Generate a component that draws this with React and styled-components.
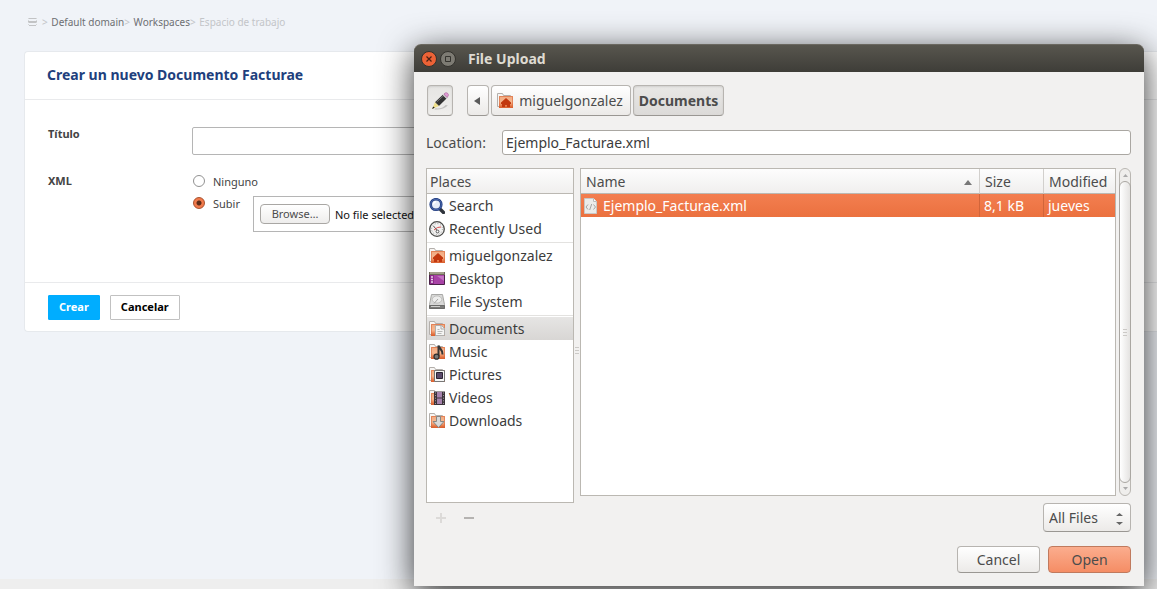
import React, { useId } from 'react';
import styled, { createGlobalStyle, css } from 'styled-components';

const GlobalStyle = createGlobalStyle`
  *, *::before, *::after { box-sizing: border-box; }
  body {
    margin: 0;
    background: #f0f3f8;
    font-family: "Noto Sans", "Open Sans", sans-serif;
    font-size: 11px;
    color: #444;
  }
  button, input, select { font: inherit; color: inherit; margin: 0; }
`;

const Page = styled.div`
  position: relative;
  display: flex;
  flex-direction: column;
  min-height: 100vh;
  overflow: hidden;
`;

const Breadcrumb = styled.nav`
  display: flex;
  align-items: center;
  height: 51px;
  padding: 0 28px 8px;
  font-size: 10px;
  color: #c3c5c8;
  gap: 5px;
`;

const Crumb = styled.a`
  margin-left: 1px;
  color: #6d6f73;
  text-decoration: none;
`;

const CurrentCrumb = styled.span`
  margin-left: 1px;
`;

const CrumbGroup = styled.span`
  white-space: nowrap;
`;

const Card = styled.main`
  margin-left: 24px;
  background: #fff;
  border: 1px solid #e6e9ed;
  border-right: 0;
  border-radius: 4px 0 0 4px;
`;

const CardHeader = styled.header`
  height: 48px;
  padding: 0 22px;
  border-bottom: 1px solid #e9eaec;
`;

const Title = styled.h1`
  margin: 0;
  font-size: 14px;
  line-height: 46px;
  font-weight: 700;
  color: #213f7d;
`;

const Form = styled.form`
  display: block;
`;

const Fields = styled.div`
  display: grid;
  grid-template-columns: 144px 1fr;
  row-gap: 18px;
  padding: 27px 23px 48px;
`;

const FieldLabel = styled.label`
  font-weight: 700;
  line-height: 14px;
`;

const FieldName = styled.div`
  font-weight: 700;
  line-height: 16px;
`;

const TextInput = styled.input`
  width: 100%;
  height: 28px;
  border: 1px solid #b5b5b5;
  border-radius: 2px;
  background: #fff;
  outline: 0;
`;

const Options = styled.div`
  display: flex;
  flex-direction: column;
`;

const OptionRow = styled.div`
  display: flex;
  align-items: flex-start;
  height: ${(p) => (p.$tall ? '39px' : '22px')};
`;

const OptionLabel = styled.label`
  display: flex;
  align-items: flex-start;
  gap: 8px;
  width: 61px;
  line-height: 18px;
`;

const Radio = styled.input`
  appearance: none;
  flex: none;
  width: 12px;
  height: 12px;
  margin: 2px 0 0 1px;
  border: 1px solid #929292;
  border-radius: 50%;
  background: #fff;
  &:checked {
    border-color: #a8502c;
    background: radial-gradient(circle, #5d2c18 0 1px, #5d2c18 2px, #f27b4c 3px, #ee7546 100%);
  }
`;

const FileField = styled.div`
  display: flex;
  align-items: center;
  flex: 1;
  gap: 5px;
  height: 36px;
  margin-top: 1px;
  padding: 0 6px;
  border: 1px solid #b5b5b5;
  color: #111;
  white-space: nowrap;
`;

const BrowseButton = styled.button`
  width: 70px;
  height: 20px;
  padding: 0;
  border: 1px solid #a9a7a4;
  border-radius: 4px;
  background: linear-gradient(#fff, #eeedec);
  color: #4c4c4c;
  line-height: 16px;
`;

const CardFooter = styled.footer`
  display: flex;
  gap: 10px;
  height: 49px;
  padding: 12px 23px;
  border-top: 1px solid #e9eaec;
`;

const ActionButton = styled.button`
  height: 25px;
  padding: 0 10px 2px;
  border: 1px solid ${(p) => (p.$primary ? '#00adff' : '#c1c1c1')};
  border-radius: 1px;
  background: ${(p) => (p.$primary ? '#00adff' : '#fff')};
  color: ${(p) => (p.$primary ? '#fff' : '#000')};
  font-weight: 700;
  line-height: 16px;
`;

const PageFoot = styled.div`
  height: 10px;
  margin-top: auto;
  background: #eeeeee;
`;

const Dialog = styled.section`
  position: absolute;
  top: 44px;
  left: 414px;
  right: 13px;
  border-radius: 7px 7px 0 0;
  background: #f2f1f0;
  box-shadow: 0 8px 34px rgba(0, 0, 0, 0.8);
  font-size: 14px;
  color: #3c3c3c;
`;

const TitleBar = styled.header`
  display: flex;
  align-items: center;
  height: 28px;
  padding: 0 7px;
  gap: 3px;
  border-radius: 7px 7px 0 0;
  border-top: 1px solid #6b6860;
  background: linear-gradient(#58564e, #3e3d38);
`;

const WindowButton = styled.button`
  display: flex;
  width: 16px;
  height: 16px;
  padding: 0;
  border: 0;
  border-radius: 50%;
  background: none;
`;

const DialogTitle = styled.h2`
  margin: 0 0 0 9px;
  font-size: 14px;
  line-height: 20px;
  font-weight: 700;
  color: #dfdbd2;
`;

const DialogBody = styled.div`
  display: flex;
  flex-direction: column;
  padding: 13px 13px 13px 12px;
`;

const raised = css`
  border: 1px solid #b7b4b0;
  border-bottom-color: #9a9793;
  border-radius: 4px;
  background: linear-gradient(#ffffff, #eceae8);
  color: #4c4c4c;
`;

const PathBar = styled.div`
  display: flex;
  gap: 2px;
  height: 31px;
  padding-left: 1px;
`;

const PathButton = styled.button`
  ${raised}
  display: flex;
  align-items: center;
  justify-content: center;
  gap: 6px;
  width: ${(p) => p.$width};
  padding: 0 2px 0 0;
  line-height: 20px;
  white-space: nowrap;
  ${(p) => p.$pressed && css`
    padding: 0;
    background: linear-gradient(#e9e8e6, #dcdad8);
    box-shadow: inset 0 1px 2px rgba(0, 0, 0, 0.1);
    font-weight: 700;
  `}
`;

const EditButton = styled(PathButton)`
  margin-right: 12px;
  background: linear-gradient(#e6e5e3, #efeeec);
`;

const LocationRow = styled.div`
  display: flex;
  align-items: center;
  margin: 14px 0 13px;
  height: 25px;
`;

const LocationLabel = styled.label`
  width: 76px;
  color: #4c4c4c;
`;

const LocationInput = styled.input`
  flex: 1;
  height: 25px;
  padding: 0 3px;
  border: 1px solid #aaa7a2;
  border-radius: 3px;
  background: #fff;
  outline: 0;
`;

const Panes = styled.div`
  display: flex;
`;

const PlacesColumn = styled.div`
  width: 148px;
`;

const PlacesBox = styled.nav`
  min-height: 335px;
  border: 1px solid #bbb8b2;
  background: #fff;
`;

const PlacesHeader = styled.div`
  height: 25px;
  padding: 0 3px;
  border-bottom: 1px solid #bbb8b2;
  background: linear-gradient(#fdfdfd, #f0efee);
  line-height: 26px;
  color: #4c4c4c;
`;

const PlaceGroup = styled.ul`
  margin: 0;
  padding: 0;
  list-style: none;
  & + & {
    margin-top: 2px;
    padding-top: 1px;
    border-top: 1px solid #e3e2e0;
  }
`;

const PlaceButton = styled.button`
  display: flex;
  align-items: center;
  gap: 4px;
  width: 100%;
  height: 23px;
  padding: 0 2px;
  border: 0;
  background: ${(p) => (p.$active ? 'linear-gradient(#e6e5e4, #d8d6d4)' : 'none')};
  line-height: 20px;
  text-align: left;
  white-space: nowrap;
`;

const PlaceTools = styled.div`
  display: flex;
  gap: 12px;
  padding: 7px 7px 0;
`;

const ToolButton = styled.button`
  display: flex;
  width: 16px;
  height: 16px;
  padding: 0;
  border: 0;
  background: none;
`;

const Splitter = styled.div`
  display: flex;
  flex-direction: column;
  gap: 2px;
  width: 6px;
  padding: 179px 1px 0;
`;

const SplitterMark = styled.span`
  height: 1px;
  background: #cbc9c6;
`;

const FilesColumn = styled.div`
  display: flex;
  flex-direction: column;
  align-items: stretch;
  flex: 1;
  gap: 7px;
`;

const FilesArea = styled.div`
  display: flex;
  gap: 3px;
  min-height: 328px;
`;

const FilesBox = styled.div`
  flex: 1;
  border: 1px solid #bbb8b2;
  background: #fff;
`;

const FileTable = styled.table`
  width: 100%;
  border-collapse: separate;
  border-spacing: 0;
  table-layout: fixed;
`;

const HeadCell = styled.th`
  width: ${(p) => p.$width};
  height: 25px;
  padding: 2px 5px 0;
  border-bottom: 1px solid #bbb8b2;
  border-left: ${(p) => (p.$first ? '0' : '1px solid #d2d0cd')};
  background: linear-gradient(#fdfdfd, #f0efee);
  font-weight: 400;
  line-height: 20px;
  text-align: left;
  white-space: nowrap;
  color: #4c4c4c;
`;

const HeadContent = styled.span`
  display: flex;
  align-items: center;
  justify-content: space-between;
  padding-right: 2px;
`;

const Cell = styled.td`
  height: 23px;
  padding: 0 ${(p) => (p.$first ? '2px' : '4px')};
  border-left: ${(p) => (p.$first ? '0' : '1px solid #d1653a')};
  background: linear-gradient(#f37e50, #eb713f);
  line-height: 20px;
  white-space: nowrap;
  color: #fff;
`;

const FileName = styled.span`
  display: flex;
  align-items: center;
  gap: 4px;
`;

const Scrollbar = styled.div`
  display: flex;
  flex-direction: column;
  align-items: center;
  width: 12px;
  border: 1px solid #bab7b2;
  border-radius: 6px;
  background: #efeeec;
`;

const ScrollArrow = styled.svg`
  flex: none;
  width: 11px;
  height: 12px;
`;

const ScrollThumb = styled.div`
  display: flex;
  flex-direction: column;
  justify-content: center;
  gap: 2px;
  flex: 1;
  width: 12px;
  padding: 0 3px;
  border: 1px solid #aaa7a2;
  border-radius: 6px;
  background: linear-gradient(90deg, #fff, #e4e3e1);
`;

const FilterWrap = styled.div`
  position: relative;
  align-self: flex-end;
  width: 88px;
  height: 29px;
`;

const FilterSelect = styled.select`
  ${raised}
  appearance: none;
  width: 100%;
  height: 100%;
  padding: 0 5px;
`;

const FilterArrows = styled.svg`
  position: absolute;
  top: 10px;
  right: 8px;
  pointer-events: none;
`;

const DialogActions = styled.div`
  display: flex;
  justify-content: flex-end;
  gap: 8px;
  margin-top: 14px;
`;

const DialogButton = styled.button`
  ${raised}
  width: 83px;
  height: 27px;
  padding: 0;
  line-height: 20px;
  ${(p) => p.$primary && css`
    border-color: #c07a5e;
    background: linear-gradient(#fbad8e, #f58d65);
  `}
`;

const Icon = ({ children, size = 16 }) => (
  <svg width={size} height={size} viewBox="0 0 16 16" fill="none" aria-hidden="true">{children}</svg>
);

const FolderBase = () => {
  const id = useId();
  return (
    <>
      <defs>
        <linearGradient id={id} x1="0" y1="0" x2="0" y2="1">
          <stop offset="0" stopColor="#f0a980" />
          <stop offset=".5" stopColor="#f7b890" />
          <stop offset="1" stopColor="#d9541f" />
        </linearGradient>
      </defs>
      <path d="M.5 13.5V.5h5l1 2h7v11z" fill="#f7f5f3" stroke="#b3afab" />
      <path d="M2 3h14v12H2z" fill={`url(#${id})`} />
      <path d="M2.5 14.5v-11h13v11z" stroke="#d9683a" strokeOpacity=".6" />
    </>
  );
};

const HomeIcon = () => (
  <Icon>
    <FolderBase />
    <path d="M9 5 4 9.500V11h1v3h3v-2h2v2h3v-3h1V9.500z" fill="#c2380f" />
  </Icon>
);

const SearchIcon = () => (
  <Icon>
    <path d="m11.500 11.500 3 3" stroke="#30343c" strokeWidth="3.400" strokeLinecap="round" />
    <circle cx="7" cy="6.500" r="5.300" fill="#e6edf8" stroke="#233f82" strokeWidth="2.600" />
    <circle cx="7" cy="6.500" r="5.300" stroke="#5875b8" strokeWidth=".8" />
    <path d="M4.500 6.500c0-1.600 1-2.600 2.500-2.700" stroke="#fff" strokeWidth="1.400" />
  </Icon>
);

const ClockIcon = () => (
  <Icon>
    <circle cx="8" cy="8" r="7.300" fill="#f2f2f1" stroke="#4b4b49" strokeWidth="1.300" />
    <circle cx="8" cy="8" r="5.400" stroke="#999" strokeDasharray="1 1.800" />
    <path d="m8.500 10-4-5" stroke="#555" />
    <path d="m5 9 3.500-2.500L12 6" stroke="#dc5050" />
    <circle cx="8.500" cy="10.500" r="1.400" fill="#fff" stroke="#555" />
  </Icon>
);

const DesktopIcon = () => (
  <Icon>
    <path d="M.5 1.500h15v12H.5z" fill="#8e2a8c" stroke="#4b2148" />
    <path d="M5 4h10v9H5z" fill="#a843a6" />
    <path d="M8 5h7v5z" fill="#c473c1" />
    <path d="M0 1h16v3H0z" fill="#6e6a58" />
    <path d="M1 2h14" stroke="#d9d6bf" />
    <path d="M2 6h2M2 8.500h2M2 11h2" stroke="#ecd3eb" strokeWidth="1.400" />
  </Icon>
);

const DiskIcon = () => (
  <Icon>
    <path d="M2.500.5h11l2 10v4H.5v-4z" fill="#d8d8d7" stroke="#a8a8a6" />
    <ellipse cx="8" cy="5.500" rx="4.800" ry="3.600" fill="#ededec" stroke="#c0c0be" />
    <path d="m9 5-4 4.500" stroke="#a5a5a3" />
    <path d="M.5 11.500h15v3H.5z" fill="#7b7b79" stroke="#6b6b69" />
    <path d="M2 12.500h9" stroke="#cfcfcd" />
  </Icon>
);

const DocumentsIcon = () => (
  <Icon>
    <FolderBase />
    <path d="M6.500 4.500h6l3 3v7h-9z" fill="#f4f4f3" stroke="#b0afad" />
    <path d="M12 4.500V8h3.500" stroke="#aaa" />
    <path d="M8.500 8.500h2M8.500 10.500h5M8.500 12.500h4" stroke="#b8b8b6" />
  </Icon>
);

const MusicIcon = () => (
  <Icon>
    <FolderBase />
    <path d="M9.500 12.500v-11c.5 3 4.500 4 4 9" stroke="#353535" strokeWidth="2" />
    <circle cx="7.500" cy="12.700" r="2.500" fill="#777" stroke="#2e2e2e" strokeWidth="1.200" />
  </Icon>
);

const PicturesIcon = () => (
  <Icon>
    <FolderBase />
    <path d="M5.500 3.500h10v11h-10z" fill="#f6f6f5" stroke="#777" />
    <path d="M7.500 5.500h6v6h-6z" fill="#5a4a6a" stroke="#2b2433" />
  </Icon>
);

const VideosIcon = () => (
  <Icon>
    <FolderBase />
    <path d="M5 1.500h11V15H5z" fill="#3a3339" />
    <path d="M8 2h5v5.500H8zM8 8.500h5V14H8z" fill="#a582ad" />
    <path d="M6.500 2.500v12M14.500 2.500v12" stroke="#a9a3a8" strokeDasharray="1 1.600" />
  </Icon>
);

const DownloadsIcon = () => (
  <Icon>
    <FolderBase />
    <path d="M7.500 3.500h4v5H15l-5.500 6-5.500-6h3.500z" fill="#d8d8d7" stroke="#868684" />
  </Icon>
);

const XmlFileIcon = () => (
  <Icon>
    <path d="M1.500.5h9l3 3v12h-12z" fill="#ececea" stroke="#c9c8c6" />
    <path d="M10.500.5v3h3" stroke="#bbb" fill="#fff" />
    <path d="M5 6.500 3 9l2 2.500M10.500 6.500l2 2.500-2 2.500M8.700 6l-2 6" stroke="#a4a4a2" />
  </Icon>
);

const PencilIcon = () => (
  <Icon size={18}>
    <path d="M4 14.500c4 .3 7-.5 9-3l2 .5c-3 3-7 4-12 3.500z" fill="#000" opacity=".18" />
    <path d="m3.500 9 7-6.500 3.300 3.300L7 12.500z" fill="#333" />
    <path d="m5 9 6.500-6" stroke="#777" strokeWidth=".8" />
    <path d="M3.500 9 7 12.500 1 15z" fill="#efe08a" />
    <path d="m1 15 .9-2.200 1.500 1.300z" fill="#222" />
    <path d="m10.500 2.800 1.300-1.200 3.200 3.200-1.300 1.300z" fill="#c9c9c9" />
    <path d="m11.500 1.800 1.200-1c1.500-.8 3.500 1.200 2.600 2.600l-1 1.400z" fill="#df9bd3" stroke="#a05a94" strokeWidth=".5" />
  </Icon>
);

const placeGroups = [
  [['Search', SearchIcon], ['Recently Used', ClockIcon]],
  [['miguelgonzalez', HomeIcon], ['Desktop', DesktopIcon], ['File System', DiskIcon]],
  [['Documents', DocumentsIcon], ['Music', MusicIcon], ['Pictures', PicturesIcon], ['Videos', VideosIcon], ['Downloads', DownloadsIcon]],
];

const GripMarks = () => (<><SplitterMark /><SplitterMark /><SplitterMark /></>);

function DocumentForm() {
  return (
    <Card>
      <CardHeader><Title>Crear un nuevo Documento Facturae</Title></CardHeader>
      <Form onSubmit={(e) => e.preventDefault()}>
        <Fields>
          <FieldLabel htmlFor="titulo">Título</FieldLabel>
          <TextInput id="titulo" type="text" />
          <FieldName id="xml-name">XML</FieldName>
          <Options role="radiogroup" aria-labelledby="xml-name">
            <OptionRow>
              <OptionLabel><Radio type="radio" name="xml" />Ninguno</OptionLabel>
            </OptionRow>
            <OptionRow $tall>
              <OptionLabel><Radio type="radio" name="xml" defaultChecked />Subir</OptionLabel>
              <FileField>
                <BrowseButton type="button">Browse…</BrowseButton>
                <span>No file selected.</span>
              </FileField>
            </OptionRow>
          </Options>
        </Fields>
        <CardFooter>
          <ActionButton $primary type="submit">Crear</ActionButton>
          <ActionButton type="button">Cancelar</ActionButton>
        </CardFooter>
      </Form>
    </Card>
  );
}

function Places() {
  return (
    <PlacesColumn>
      <PlacesBox aria-label="Places">
        <PlacesHeader>Places</PlacesHeader>
        {placeGroups.map((group) => (
          <PlaceGroup key={group[0][0]}>
            {group.map(([name, Glyph]) => (
              <li key={name}>
                <PlaceButton type="button" $active={name === 'Documents'}><Glyph />{name}</PlaceButton>
              </li>
            ))}
          </PlaceGroup>
        ))}
      </PlacesBox>
      <PlaceTools>
        <ToolButton type="button" aria-label="Add">
          <Icon><path d="M8 3v10M3 8h10" stroke="#dcdad8" strokeWidth="2" /></Icon>
        </ToolButton>
        <ToolButton type="button" aria-label="Remove">
          <Icon><path d="M3 8h10" stroke="#b5b3b1" strokeWidth="2" /></Icon>
        </ToolButton>
      </PlaceTools>
    </PlacesColumn>
  );
}

function Files() {
  return (
    <FilesColumn>
      <FilesArea>
        <FilesBox>
          <FileTable>
            <thead>
              <tr>
                <HeadCell $first>
                  <HeadContent>
                    Name
                    <svg width="8" height="5" aria-hidden="true"><path d="M0 5 4 0l4 5z" fill="#777" /></svg>
                  </HeadContent>
                </HeadCell>
                <HeadCell $width="64px">Size</HeadCell>
                <HeadCell $width="72px">Modified</HeadCell>
              </tr>
            </thead>
            <tbody>
              <tr>
                <Cell $first><FileName><XmlFileIcon />Ejemplo_Facturae.xml</FileName></Cell>
                <Cell>8,1 kB</Cell>
                <Cell>jueves</Cell>
              </tr>
            </tbody>
          </FileTable>
        </FilesBox>
        <Scrollbar>
          <ScrollArrow viewBox="0 0 11 12"><path d="M3 8h5L5.500 5z" fill="#aaa" /></ScrollArrow>
          <ScrollThumb><GripMarks /></ScrollThumb>
          <ScrollArrow viewBox="0 0 11 12"><path d="M3 4h5L5.500 7z" fill="#aaa" /></ScrollArrow>
        </Scrollbar>
      </FilesArea>
      <FilterWrap>
        <FilterSelect aria-label="File type"><option>All Files</option></FilterSelect>
        <FilterArrows width="7" height="12" aria-hidden="true">
          <path d="M0 3 3.500 0 7 3zM0 9l3.500 3L7 9z" fill="#666" />
        </FilterArrows>
      </FilterWrap>
    </FilesColumn>
  );
}

function UploadDialog() {
  return (
    <Dialog role="dialog" aria-labelledby="dialog-title">
      <TitleBar>
        <WindowButton type="button" aria-label="Close">
          <Icon>
            <circle cx="8" cy="8" r="7.500" fill="#ec6236" stroke="#33322d" />
            <path d="m5.500 5.500 5 5m0-5-5 5" stroke="#4a2014" strokeWidth="1.200" />
          </Icon>
        </WindowButton>
        <WindowButton type="button" aria-label="Maximize">
          <Icon>
            <circle cx="8" cy="8" r="7.500" fill="#7d7b73" stroke="#33322d" />
            <path d="M5.500 5.500h5v5h-5z" stroke="#35342f" />
          </Icon>
        </WindowButton>
        <DialogTitle id="dialog-title">File Upload</DialogTitle>
      </TitleBar>
      <DialogBody>
        <PathBar>
          <EditButton type="button" $pressed $width="26px" aria-label="Type a file name"><PencilIcon /></EditButton>
          <PathButton type="button" $width="22px" aria-label="Back">
            <svg width="6" height="8" aria-hidden="true"><path d="M6 0v8L0 4z" fill="#5a5a5a" /></svg>
          </PathButton>
          <PathButton type="button" $width="140px"><HomeIcon />miguelgonzalez</PathButton>
          <PathButton type="button" $pressed $width="91px">Documents</PathButton>
        </PathBar>
        <LocationRow>
          <LocationLabel htmlFor="location">Location:</LocationLabel>
          <LocationInput id="location" type="text" defaultValue="Ejemplo_Facturae.xml" />
        </LocationRow>
        <Panes>
          <Places />
          <Splitter><GripMarks /></Splitter>
          <Files />
        </Panes>
        <DialogActions>
          <DialogButton type="button">Cancel</DialogButton>
          <DialogButton type="button" $primary>Open</DialogButton>
        </DialogActions>
      </DialogBody>
    </Dialog>
  );
}

export default function App() {
  return (
    <>
      <GlobalStyle />
      <Page>
        <Breadcrumb aria-label="Breadcrumb">
          <svg width="9" height="8" aria-hidden="true">
            <path d="M1 .5h7M0 3.500h9M0 4.500h9M1 7.500h7" stroke="#c2c3c5" />
            <path d="M.5 0v8M8.500 0v8" stroke="#d6d8da" strokeDasharray="1 1" />
          </svg>
          <CrumbGroup>&gt; <Crumb href="#domain">Default domain</Crumb>&gt; <Crumb href="#workspaces">Workspaces</Crumb>&gt; <CurrentCrumb>Espacio de trabajo</CurrentCrumb></CrumbGroup>
        </Breadcrumb>
        <DocumentForm />
        <PageFoot />
        <UploadDialog />
      </Page>
    </>
  );
}
